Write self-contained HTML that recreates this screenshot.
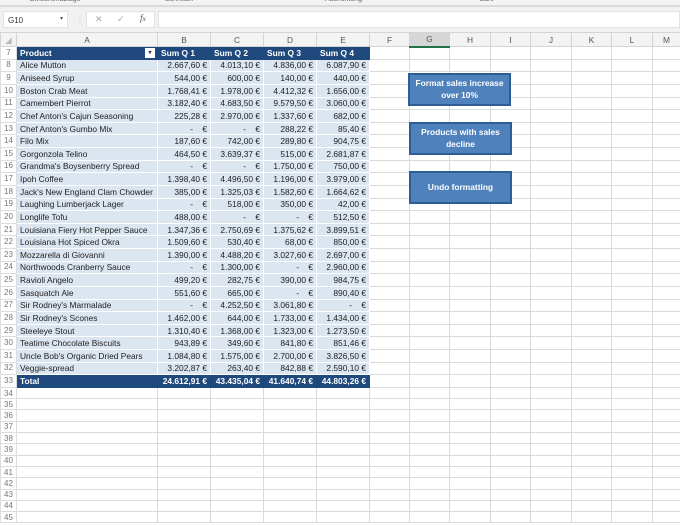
<!DOCTYPE html>
<html><head><meta charset="utf-8">
<style>
*{margin:0;padding:0;box-sizing:border-box}
body{width:680px;height:526px;overflow:hidden;background:#fff;font-family:"Liberation Sans",sans-serif;position:relative}
.top{position:absolute;left:0;top:0;width:680px;height:5px;background:#f3f3f3;font-size:7px;color:#666;overflow:hidden}
.top span{position:absolute;top:-4px}
.bar{position:absolute;left:0;top:5px;width:680px;height:27px;background:#f1f1f1;border-top:2px solid #dadada}
.box{position:absolute;background:#fff;border:1px solid #e2e2e2}
table{position:absolute;left:0;top:32px;width:680px;border-collapse:collapse;table-layout:fixed;font-size:8.4px;color:#222}
td{border:1px solid #dadada;height:12.64px;padding:0 3px;white-space:nowrap;overflow:hidden;line-height:10px}
tr.e td{height:11.3px;line-height:9px}
td.h{background:#fff;color:#777;text-align:center;padding:0;border-color:#ddd;font-size:8px}
tr.ch td{background:#f3f3f3;color:#555;text-align:center;height:14px;border-color:#d4d4d4}
tr.ch td.sel{background:#d6d6d6;border-bottom:2px solid #217346}
td.r{text-align:right}
tr.d td.c{background:#dce6f1;border-color:#fff}
tr.hd td.c,tr.t td.c{background:#1f497d;color:#fff;font-weight:bold;border-color:#1f497d}
.btn{position:absolute;width:103px;height:33px;background:#4f81bd;border:2px solid #2e5d96;color:#fff;font-size:8.4px;font-weight:bold;text-align:center;display:flex;align-items:center;justify-content:center;line-height:11.5px}
</style></head><body>
<div class="top"><span style="left:30px">Zwischenablage</span><span style="left:165px">Schriftart</span><span style="left:325px">Ausrichtung</span><span style="left:480px">Zahl</span></div>
<div class="bar">
<div class="box" style="left:3px;top:4px;width:65px;height:17px;font-size:8px;padding:4px 4px;color:#333">G10<span style="position:absolute;right:4px;top:3px;font-size:6px;color:#555">▾</span></div>
<div style="position:absolute;left:76px;top:8px;color:#bbb;font-size:8px">⋮</div>
<div class="box" style="left:86px;top:4px;width:69px;height:17px;font-size:9px;color:#aaa"><span style="position:absolute;left:8px;top:2px">✕</span><span style="position:absolute;left:30px;top:2px">✓</span><span style="position:absolute;left:53px;top:1px;font-family:'Liberation Serif',serif;font-style:italic;color:#555">f<small>x</small></span></div>
<div class="box" style="left:158px;top:4px;width:522px;height:17px"></div>
</div>
<table>
<colgroup><col style="width:16px"><col style="width:141px"><col style="width:53px"><col style="width:53px"><col style="width:53px"><col style="width:53px"><col style="width:40px"><col style="width:40px"><col style="width:41px"><col style="width:40px"><col style="width:41px"><col style="width:40px"><col style="width:41px"><col style="width:28px"></colgroup>
<tr class="ch"><td style="color:#bbb">◢</td><td>A</td><td>B</td><td>C</td><td>D</td><td>E</td><td>F</td><td class="sel">G</td><td>H</td><td>I</td><td>J</td><td>K</td><td>L</td><td>M</td></tr>
<tr class="hd"><td class="h">7</td><td class="c" style="position:relative">Product<span style="position:absolute;right:2px;top:1px;width:10px;height:10px;background:#fff;color:#333;font-size:6px;text-align:center;line-height:10px">▾</span></td><td class="c">Sum Q 1</td><td class="c">Sum Q 2</td><td class="c">Sum Q 3</td><td class="c">Sum Q 4</td><td></td><td></td><td></td><td></td><td></td><td></td><td></td><td></td></tr>
<tr class="d"><td class="h">8</td><td class="c">Alice Mutton</td><td class="c r">2.667,60 €</td><td class="c r">4.013,10 €</td><td class="c r">4.836,00 €</td><td class="c r">6.087,90 €</td><td></td><td></td><td></td><td></td><td></td><td></td><td></td><td></td></tr>
<tr class="d"><td class="h">9</td><td class="c">Aniseed Syrup</td><td class="c r">544,00 €</td><td class="c r">600,00 €</td><td class="c r">140,00 €</td><td class="c r">440,00 €</td><td></td><td></td><td></td><td></td><td></td><td></td><td></td><td></td></tr>
<tr class="d"><td class="h">10</td><td class="c">Boston Crab Meat</td><td class="c r">1.768,41 €</td><td class="c r">1.978,00 €</td><td class="c r">4.412,32 €</td><td class="c r">1.656,00 €</td><td></td><td></td><td></td><td></td><td></td><td></td><td></td><td></td></tr>
<tr class="d"><td class="h">11</td><td class="c">Camembert Pierrot</td><td class="c r">3.182,40 €</td><td class="c r">4.683,50 €</td><td class="c r">9.579,50 €</td><td class="c r">3.060,00 €</td><td></td><td></td><td></td><td></td><td></td><td></td><td></td><td></td></tr>
<tr class="d"><td class="h">12</td><td class="c">Chef Anton's Cajun Seasoning</td><td class="c r">225,28 €</td><td class="c r">2.970,00 €</td><td class="c r">1.337,60 €</td><td class="c r">682,00 €</td><td></td><td></td><td></td><td></td><td></td><td></td><td></td><td></td></tr>
<tr class="d"><td class="h">13</td><td class="c">Chef Anton's Gumbo Mix</td><td class="c r">-&nbsp;&nbsp;&nbsp;&nbsp;€</td><td class="c r">-&nbsp;&nbsp;&nbsp;&nbsp;€</td><td class="c r">288,22 €</td><td class="c r">85,40 €</td><td></td><td></td><td></td><td></td><td></td><td></td><td></td><td></td></tr>
<tr class="d"><td class="h">14</td><td class="c">Filo Mix</td><td class="c r">187,60 €</td><td class="c r">742,00 €</td><td class="c r">289,80 €</td><td class="c r">904,75 €</td><td></td><td></td><td></td><td></td><td></td><td></td><td></td><td></td></tr>
<tr class="d"><td class="h">15</td><td class="c">Gorgonzola Telino</td><td class="c r">464,50 €</td><td class="c r">3.639,37 €</td><td class="c r">515,00 €</td><td class="c r">2.681,87 €</td><td></td><td></td><td></td><td></td><td></td><td></td><td></td><td></td></tr>
<tr class="d"><td class="h">16</td><td class="c">Grandma's Boysenberry Spread</td><td class="c r">-&nbsp;&nbsp;&nbsp;&nbsp;€</td><td class="c r">-&nbsp;&nbsp;&nbsp;&nbsp;€</td><td class="c r">1.750,00 €</td><td class="c r">750,00 €</td><td></td><td></td><td></td><td></td><td></td><td></td><td></td><td></td></tr>
<tr class="d"><td class="h">17</td><td class="c">Ipoh Coffee</td><td class="c r">1.398,40 €</td><td class="c r">4.496,50 €</td><td class="c r">1.196,00 €</td><td class="c r">3.979,00 €</td><td></td><td></td><td></td><td></td><td></td><td></td><td></td><td></td></tr>
<tr class="d"><td class="h">18</td><td class="c">Jack's New England Clam Chowder</td><td class="c r">385,00 €</td><td class="c r">1.325,03 €</td><td class="c r">1.582,60 €</td><td class="c r">1.664,62 €</td><td></td><td></td><td></td><td></td><td></td><td></td><td></td><td></td></tr>
<tr class="d"><td class="h">19</td><td class="c">Laughing Lumberjack Lager</td><td class="c r">-&nbsp;&nbsp;&nbsp;&nbsp;€</td><td class="c r">518,00 €</td><td class="c r">350,00 €</td><td class="c r">42,00 €</td><td></td><td></td><td></td><td></td><td></td><td></td><td></td><td></td></tr>
<tr class="d"><td class="h">20</td><td class="c">Longlife Tofu</td><td class="c r">488,00 €</td><td class="c r">-&nbsp;&nbsp;&nbsp;&nbsp;€</td><td class="c r">-&nbsp;&nbsp;&nbsp;&nbsp;€</td><td class="c r">512,50 €</td><td></td><td></td><td></td><td></td><td></td><td></td><td></td><td></td></tr>
<tr class="d"><td class="h">21</td><td class="c">Louisiana Fiery Hot Pepper Sauce</td><td class="c r">1.347,36 €</td><td class="c r">2.750,69 €</td><td class="c r">1.375,62 €</td><td class="c r">3.899,51 €</td><td></td><td></td><td></td><td></td><td></td><td></td><td></td><td></td></tr>
<tr class="d"><td class="h">22</td><td class="c">Louisiana Hot Spiced Okra</td><td class="c r">1.509,60 €</td><td class="c r">530,40 €</td><td class="c r">68,00 €</td><td class="c r">850,00 €</td><td></td><td></td><td></td><td></td><td></td><td></td><td></td><td></td></tr>
<tr class="d"><td class="h">23</td><td class="c">Mozzarella di Giovanni</td><td class="c r">1.390,00 €</td><td class="c r">4.488,20 €</td><td class="c r">3.027,60 €</td><td class="c r">2.697,00 €</td><td></td><td></td><td></td><td></td><td></td><td></td><td></td><td></td></tr>
<tr class="d"><td class="h">24</td><td class="c">Northwoods Cranberry Sauce</td><td class="c r">-&nbsp;&nbsp;&nbsp;&nbsp;€</td><td class="c r">1.300,00 €</td><td class="c r">-&nbsp;&nbsp;&nbsp;&nbsp;€</td><td class="c r">2.960,00 €</td><td></td><td></td><td></td><td></td><td></td><td></td><td></td><td></td></tr>
<tr class="d"><td class="h">25</td><td class="c">Ravioli Angelo</td><td class="c r">499,20 €</td><td class="c r">282,75 €</td><td class="c r">390,00 €</td><td class="c r">984,75 €</td><td></td><td></td><td></td><td></td><td></td><td></td><td></td><td></td></tr>
<tr class="d"><td class="h">26</td><td class="c">Sasquatch Ale</td><td class="c r">551,60 €</td><td class="c r">665,00 €</td><td class="c r">-&nbsp;&nbsp;&nbsp;&nbsp;€</td><td class="c r">890,40 €</td><td></td><td></td><td></td><td></td><td></td><td></td><td></td><td></td></tr>
<tr class="d"><td class="h">27</td><td class="c">Sir Rodney's Marmalade</td><td class="c r">-&nbsp;&nbsp;&nbsp;&nbsp;€</td><td class="c r">4.252,50 €</td><td class="c r">3.061,80 €</td><td class="c r">-&nbsp;&nbsp;&nbsp;&nbsp;€</td><td></td><td></td><td></td><td></td><td></td><td></td><td></td><td></td></tr>
<tr class="d"><td class="h">28</td><td class="c">Sir Rodney's Scones</td><td class="c r">1.462,00 €</td><td class="c r">644,00 €</td><td class="c r">1.733,00 €</td><td class="c r">1.434,00 €</td><td></td><td></td><td></td><td></td><td></td><td></td><td></td><td></td></tr>
<tr class="d"><td class="h">29</td><td class="c">Steeleye Stout</td><td class="c r">1.310,40 €</td><td class="c r">1.368,00 €</td><td class="c r">1.323,00 €</td><td class="c r">1.273,50 €</td><td></td><td></td><td></td><td></td><td></td><td></td><td></td><td></td></tr>
<tr class="d"><td class="h">30</td><td class="c">Teatime Chocolate Biscuits</td><td class="c r">943,89 €</td><td class="c r">349,60 €</td><td class="c r">841,80 €</td><td class="c r">851,46 €</td><td></td><td></td><td></td><td></td><td></td><td></td><td></td><td></td></tr>
<tr class="d"><td class="h">31</td><td class="c">Uncle Bob's Organic Dried Pears</td><td class="c r">1.084,80 €</td><td class="c r">1.575,00 €</td><td class="c r">2.700,00 €</td><td class="c r">3.826,50 €</td><td></td><td></td><td></td><td></td><td></td><td></td><td></td><td></td></tr>
<tr class="d"><td class="h">32</td><td class="c">Veggie-spread</td><td class="c r">3.202,87 €</td><td class="c r">263,40 €</td><td class="c r">842,88 €</td><td class="c r">2.590,10 €</td><td></td><td></td><td></td><td></td><td></td><td></td><td></td><td></td></tr>
<tr class="t"><td class="h">33</td><td class="c">Total</td><td class="c r">24.612,91 €</td><td class="c r">43.435,04 €</td><td class="c r">41.640,74 €</td><td class="c r">44.803,26 €</td><td></td><td></td><td></td><td></td><td></td><td></td><td></td><td></td></tr>
<tr class="e"><td class="h">34</td><td></td><td></td><td></td><td></td><td></td><td></td><td></td><td></td><td></td><td></td><td></td><td></td><td></td></tr>
<tr class="e"><td class="h">35</td><td></td><td></td><td></td><td></td><td></td><td></td><td></td><td></td><td></td><td></td><td></td><td></td><td></td></tr>
<tr class="e"><td class="h">36</td><td></td><td></td><td></td><td></td><td></td><td></td><td></td><td></td><td></td><td></td><td></td><td></td><td></td></tr>
<tr class="e"><td class="h">37</td><td></td><td></td><td></td><td></td><td></td><td></td><td></td><td></td><td></td><td></td><td></td><td></td><td></td></tr>
<tr class="e"><td class="h">38</td><td></td><td></td><td></td><td></td><td></td><td></td><td></td><td></td><td></td><td></td><td></td><td></td><td></td></tr>
<tr class="e"><td class="h">39</td><td></td><td></td><td></td><td></td><td></td><td></td><td></td><td></td><td></td><td></td><td></td><td></td><td></td></tr>
<tr class="e"><td class="h">40</td><td></td><td></td><td></td><td></td><td></td><td></td><td></td><td></td><td></td><td></td><td></td><td></td><td></td></tr>
<tr class="e"><td class="h">41</td><td></td><td></td><td></td><td></td><td></td><td></td><td></td><td></td><td></td><td></td><td></td><td></td><td></td></tr>
<tr class="e"><td class="h">42</td><td></td><td></td><td></td><td></td><td></td><td></td><td></td><td></td><td></td><td></td><td></td><td></td><td></td></tr>
<tr class="e"><td class="h">43</td><td></td><td></td><td></td><td></td><td></td><td></td><td></td><td></td><td></td><td></td><td></td><td></td><td></td></tr>
<tr class="e"><td class="h">44</td><td></td><td></td><td></td><td></td><td></td><td></td><td></td><td></td><td></td><td></td><td></td><td></td><td></td></tr>
<tr class="e"><td class="h">45</td><td></td><td></td><td></td><td></td><td></td><td></td><td></td><td></td><td></td><td></td><td></td><td></td><td></td></tr>
</table>
<div class="btn" style="left:408px;top:73px">Format sales increase<br>over 10%</div>
<div class="btn" style="left:409px;top:122px">Products with sales<br>decline</div>
<div class="btn" style="left:409px;top:171px">Undo formatting</div>
</body></html>
